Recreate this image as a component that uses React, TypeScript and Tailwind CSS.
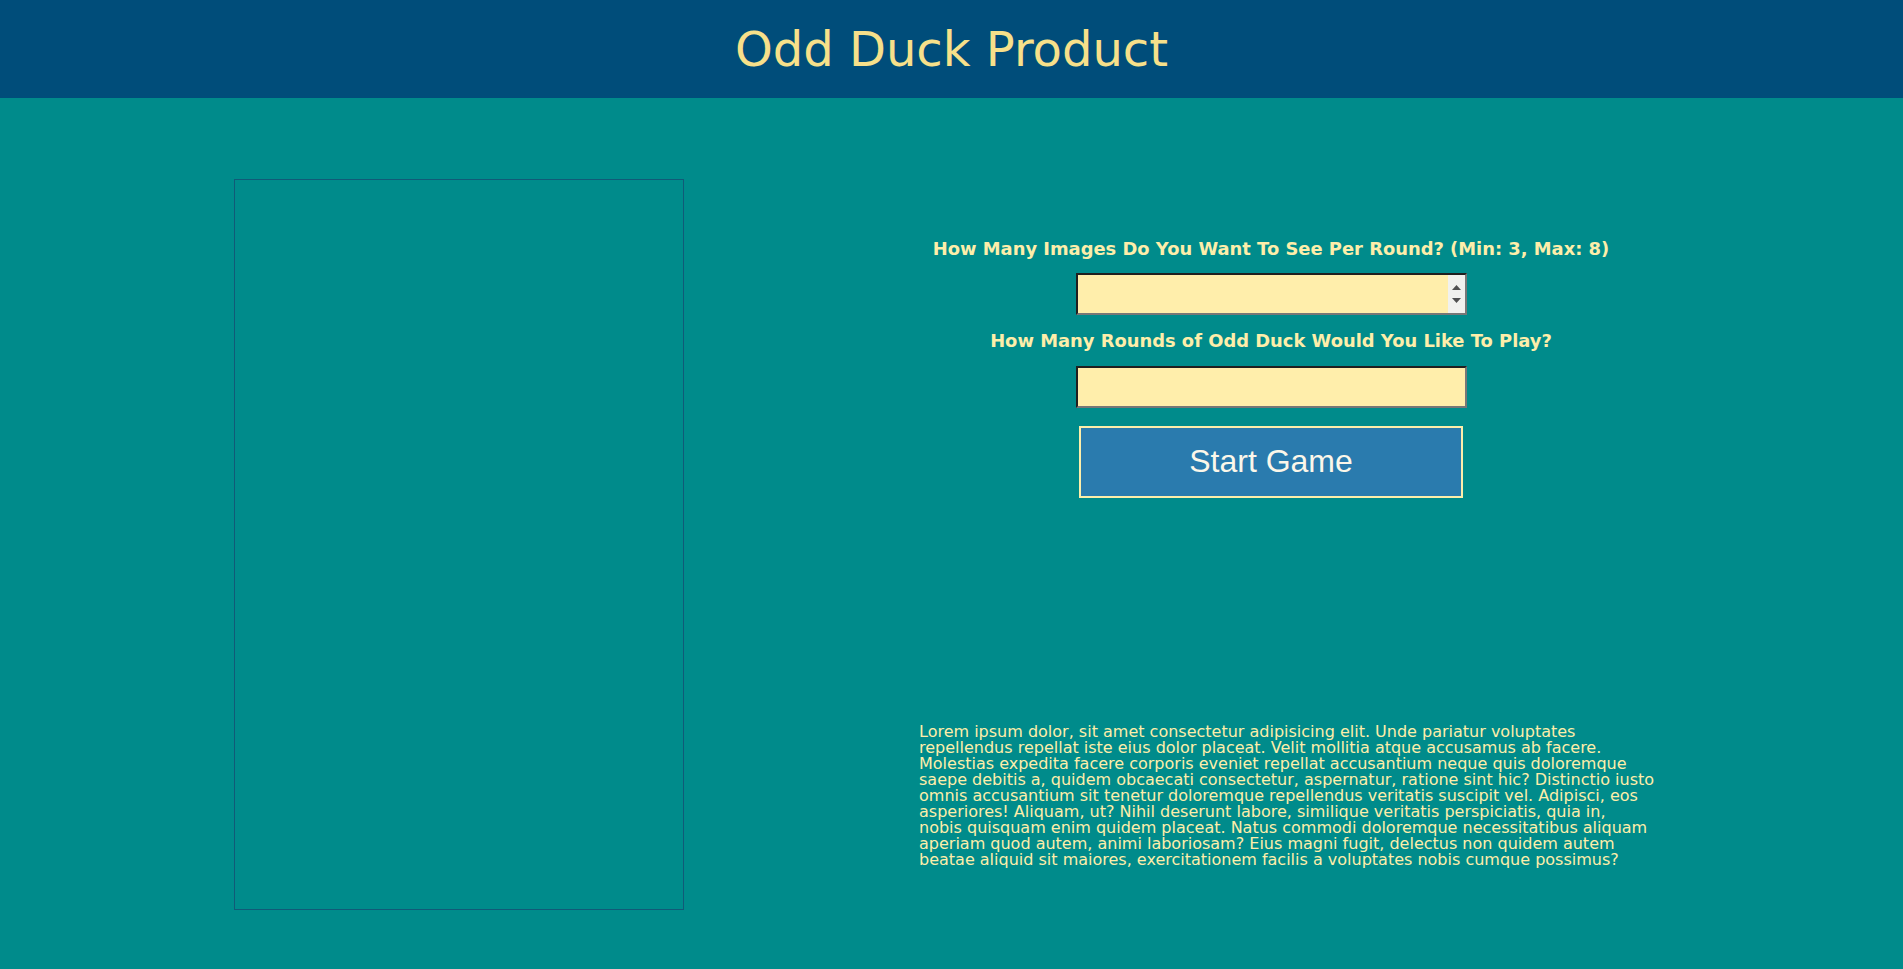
// App.tsx
export default function App() {
  return (
    <div className="min-h-screen bg-[#008b8b] font-['DejaVu_Sans',Verdana,sans-serif]">
      <header className="h-[98px] bg-[#004d7a] flex items-center justify-center">
        <h1 className="text-[48px] leading-none text-[#f7e08a] font-normal">Odd Duck Product</h1>
      </header>

      <main className="flex pt-[81px] pb-[58px]">
        {/* product images area */}
        <section className="ml-[234px] w-[450px] h-[731px] border border-[#115a78] shrink-0" />

        <div className="ml-[235px] flex flex-col">
          <form className="w-[704px] flex flex-col items-center mt-[59px]" onSubmit={e => e.preventDefault()}>
            <label className="block text-[17.9px] leading-[21px] font-bold text-[#fdeeaa] whitespace-nowrap">
              How Many Images Do You Want To See Per Round? (Min: 3, Max: 8)
            </label>
            <div className="relative mt-[14px]">
              <input
                type="number"
                min={3}
                max={8}
                className="block w-[391px] h-[42px] bg-[#ffeeab] border-2 border-t-[#1f1f1f] border-l-[#1f1f1f] border-b-[#777] border-r-[#777] px-1 [appearance:textfield]"
              />
              {/* spin buttons as shown while hovered */}
              <div className="absolute right-[2px] top-[2px] bottom-[2px] w-[17px] bg-[#f1f1ee] flex flex-col items-center justify-center gap-[8px]">
                <svg width="9" height="5" viewBox="0 0 9 5"><path d="M4.5 0L9 5H0Z" fill="#505050" /></svg>
                <svg width="9" height="5" viewBox="0 0 9 5"><path d="M0 0H9L4.5 5Z" fill="#505050" /></svg>
              </div>
            </div>
            <label className="block mt-[15px] text-[17.9px] leading-[21px] font-bold text-[#fdeeaa] whitespace-nowrap">
              How Many Rounds of Odd Duck Would You Like To Play?
            </label>
            <input
              type="text"
              className="mt-[15px] w-[391px] h-[42px] bg-[#ffeeab] border-2 border-t-[#1f1f1f] border-l-[#1f1f1f] border-b-[#777] border-r-[#777] px-1"
            />
            <button
              type="submit"
              className="mt-[18px] w-[384px] h-[72px] bg-[#2a7bae] border-2 border-[#fdeeaa] text-[#fbf7ea] text-[32px] leading-none pb-[2px] font-['Liberation_Sans',Arial,sans-serif]"
            >
              Start Game
            </button>
          </form>

          <p className="mt-[226px] w-[745px] text-[16px] leading-[16px] text-[#fdeeaa]">
            Lorem ipsum dolor, sit amet consectetur adipisicing elit. Unde pariatur voluptates repellendus repellat iste eius dolor placeat. Velit mollitia atque accusamus ab facere. Molestias expedita facere corporis eveniet repellat accusantium neque quis doloremque saepe debitis a, quidem obcaecati consectetur, aspernatur, ratione sint hic? Distinctio iusto omnis accusantium sit tenetur doloremque repellendus veritatis suscipit vel. Adipisci, eos asperiores! Aliquam, ut? Nihil deserunt labore, similique veritatis perspiciatis, quia in, nobis{'\u00a0'}quisquam enim quidem placeat. Natus commodi doloremque necessitatibus aliquam aperiam quod autem, animi laboriosam? Eius magni fugit, delectus non quidem autem beatae aliquid sit maiores, exercitationem facilis a voluptates nobis cumque possimus?
          </p>
        </div>
      </main>
    </div>
  )
}
